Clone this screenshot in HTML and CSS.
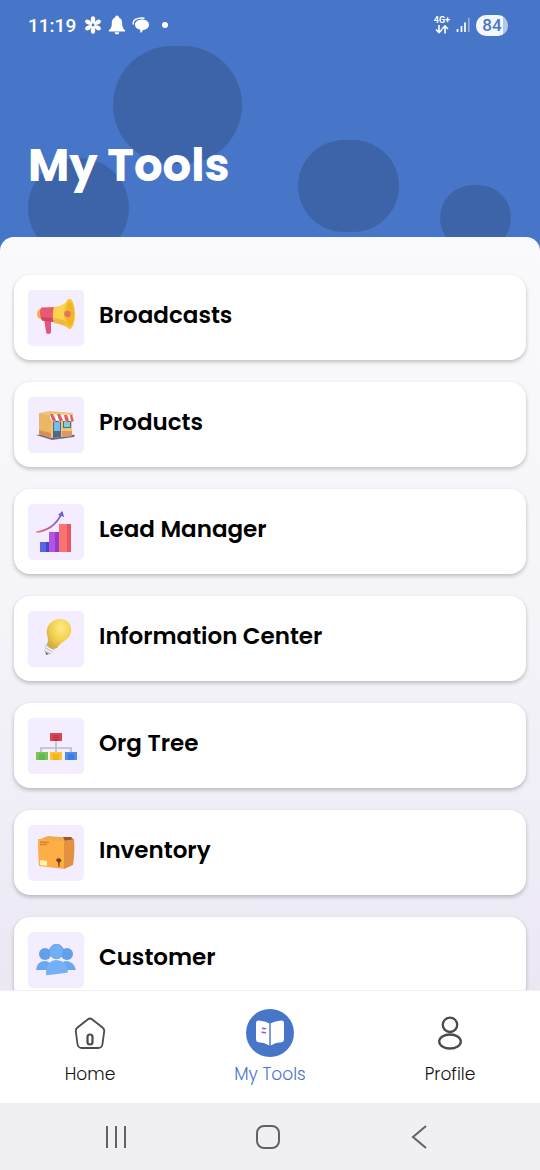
FILE: index.html
```html
<!DOCTYPE html>
<html lang="en">
<head>
  <meta charset="UTF-8">
  <meta name="viewport" content="width=device-width, initial-scale=1.0">
  <title>My Tools</title>
  <link rel="stylesheet" href="styles.css">
</head>
<body>
  <header class="header">
    <div class="bubble bubble-1"></div>
    <div class="bubble bubble-2"></div>
    <div class="bubble bubble-3"></div>
    <div class="bubble bubble-4"></div>

    <!-- Phone status bar -->
    <div class="status-bar">
      <div class="status-left">
        <span class="time">11:19</span>
        <svg width="18" height="18" viewBox="0 0 18 18" fill="#fff">
          <ellipse cx="9" cy="3.4" rx="2.2" ry="3.2"/>
          <ellipse cx="9" cy="3.4" rx="2.2" ry="3.2" transform="rotate(60 9 9)"/>
          <ellipse cx="9" cy="3.4" rx="2.2" ry="3.2" transform="rotate(120 9 9)"/>
          <ellipse cx="9" cy="3.4" rx="2.2" ry="3.2" transform="rotate(180 9 9)"/>
          <ellipse cx="9" cy="3.4" rx="2.2" ry="3.2" transform="rotate(240 9 9)"/>
          <ellipse cx="9" cy="3.4" rx="2.2" ry="3.2" transform="rotate(300 9 9)"/>
          <circle cx="9" cy="9" r="2.4" fill="none" stroke="#fff" stroke-width="2"/>
        </svg>
        <svg width="18" height="20" viewBox="0 0 18 20" fill="#fff">
          <circle cx="9" cy="2.2" r="1.8"/>
          <path d="M9 2.2C5.500 2.200 3.800 4.800 3.800 8c0 4.200-1 5.600-2.800 7.200-.5.6-.2 1.300.5 1.300h15c.7 0 1-.7.5-1.300-1.800-1.600-2.800-3-2.800-7.200 0-3.200-1.700-5.800-5.200-5.800z"/>
          <path d="M6.700 17.300h4.600c-.2 1.500-1.100 2.200-2.300 2.200s-2.100-.7-2.300-2.200z"/>
        </svg>
        <svg width="18" height="18" viewBox="0 0 18 18" fill="#fff">
          <path d="M10 3.500c4.200 0 7 2.200 7 5.200s-2.600 4.900-5.800 5.200l-2.600 3.400-.6-3.700c-2.900-.5-5-2.300-5-4.900 0-3 2.800-5.200 7-5.200z"/>
          <path d="M1.300 8C.5 4.500 4.500 1.300 12 2.200" fill="none" stroke="#fff" stroke-width="1.400" stroke-linecap="round"/>
        </svg>
        <span class="dot"></span>
      </div>
      <div class="status-right">
        <div class="network">
          <span>4G+</span>
          <svg width="14" height="9" viewBox="0 0 14 9" fill="none" stroke="#fff" stroke-width="1.6">
            <path d="M4 0v7.5M1 4.500l3 3 3-3M10 8.500V1M7 4l3-3 3 3"/>
          </svg>
        </div>
        <svg width="14" height="16" viewBox="0 0 14 16" stroke="#fff" stroke-width="1.7">
          <path d="M1.500 12v3M5.500 9v6M9 5.500V15"/>
          <path d="M12.800 1v14" opacity=".4"/>
        </svg>
        <span class="battery">84</span>
      </div>
    </div>

    <h1>My Tools</h1>
  </header>

  <main class="sheet">
    <a class="card" href="#">
      <span class="tile">
        <svg width="42" height="42" viewBox="0 0 42 42">
          <path d="M9 21h7v14q0 2-2.500 2t-2.500-2z" fill="#e0567c"/>
          <ellipse cx="5.500" cy="17" rx="3.500" ry="5" fill="#f3b24c"/>
          <path d="M6 10.500L20 10v15L7 23.500q-3.500-6.500-1-13z" fill="#e75a72"/>
          <path d="M6 20l14 1v4L7 23.500z" fill="#cf436a"/>
          <path d="M19 10Q28 9 34 3l2 29q-8-5-17-6-2.500-8 0-16z" fill="#fbd351"/>
          <path d="M19 21q9 1 17 6v5q-8-5-17-6z" fill="#f1b73d"/>
          <ellipse cx="34.500" cy="17" rx="5.500" ry="15" fill="#f7c52f"/>
          <ellipse cx="35" cy="17" rx="4" ry="12" fill="#f0b52a"/>
          <circle cx="32.500" cy="17" r="3.200" fill="#e8705e"/>
        </svg>
      </span>
      <span class="label">Broadcasts</span>
    </a>

    <a class="card" href="#">
      <span class="tile">
        <svg width="42" height="42" viewBox="0 0 42 42">
          <path d="M1 31l16-2 23 2-1 2-22 3z" fill="#716d80"/>
          <path d="M4 9l11-2 23 2v6H14z" fill="#eec477"/>
          <path d="M4 9l12 3v22L4 30z" fill="#e9b765"/>
          <path d="M16 11l21 1v20l-21 2z" fill="#f2c66f"/>
          <path d="M4 26l12 3v5L4 30z" fill="#d78f58"/>
          <path d="M18 17h8v16l-8 1z" fill="#526687"/>
          <path d="M19 18h6v9h-6z" fill="#72bdea"/>
          <path d="M28 17h8v7h-8z" fill="#3f7188"/>
          <path d="M29 18h6v5h-6z" fill="#82cadd"/>
          <path d="M27 27h10v5l-10 1z" fill="#dc9961"/>
          <path d="M15 10l22 1 2 6-3 1-2-2-3 2-3-2-3 2-3-2-3 2-3-2-1-2z" fill="#fff"/>
          <path d="M15 10h3l3 6-2 2-2-2zM22 10h3l3 6-3 2-1-2zM29 11h3l2 5-3 2-1-2zM35 11h2l2 6-3 1z" fill="#e45d60"/>
        </svg>
      </span>
      <span class="label">Products</span>
    </a>

    <a class="card" href="#">
      <span class="tile">
        <svg width="42" height="42" viewBox="0 0 42 42">
          <defs>
            <linearGradient id="curve" x1="0" y1="1" x2="1" y2="0">
              <stop offset="0" stop-color="#f0646b"/>
              <stop offset="1" stop-color="#6b5ce0"/>
            </linearGradient>
          </defs>
          <path d="M5 31h9v10H5z" fill="#5366e6"/>
          <path d="M11 31h3v10h-3z" fill="#4247bd"/>
          <path d="M14 21h10v20H14z" fill="#b554e4"/>
          <path d="M20 21h4v20h-4z" fill="#973cc7"/>
          <path d="M24 13h12v28H24z" fill="#fb7270"/>
          <path d="M32 13h4v28h-4z" fill="#e85761"/>
          <path d="M2 21Q18 19 26 4" fill="none" stroke="url(#curve)" stroke-width="1.6" stroke-linecap="round"/>
          <path d="M27.500 0L29 6l-6-2z" fill="#6960d8"/>
        </svg>
      </span>
      <span class="label">Lead Manager</span>
    </a>

    <a class="card" href="#">
      <span class="tile">
        <svg width="42" height="42" viewBox="0 0 42 42">
          <defs>
            <radialGradient id="bulb" cx=".6" cy=".3" r=".75">
              <stop offset="0" stop-color="#ffeb83"/>
              <stop offset=".55" stop-color="#f3d14f"/>
              <stop offset="1" stop-color="#d2a941"/>
            </radialGradient>
          </defs>
          <path d="M11 26l9 5-4 5q-2 1-4-.5T9 32z" fill="#c4c5cc"/>
          <path d="M10.500 28.500l8 4.500M9.500 31l7.500 4" stroke="#fff" stroke-width="1.2"/>
          <path d="M10 34l3.500 2-2 1z" fill="#575761"/>
          <path d="M12 26q2-4 0-9C10 8 17 1 25 1c8 0 12 6 11 13-1 8-10 9-14 16-4 2-9 0-10-4z" fill="url(#bulb)"/>
        </svg>
      </span>
      <span class="label">Information Center</span>
    </a>

    <a class="card" href="#">
      <span class="tile">
        <svg width="42" height="42" viewBox="0 0 42 42">
          <path d="M21 14v14M6 28v-5h30v5" fill="none" stroke="#babbc5" stroke-width="1.6"/>
          <path d="M15 8h12v8H15z" fill="#dc4250"/>
          <path d="M18 10h6v6h-6z" fill="#c5374a"/>
          <path d="M1 27h12v8H1z" fill="#75c653"/>
          <path d="M4 29h6v6H4z" fill="#67b54d"/>
          <path d="M15 27h12v8H15z" fill="#fbc629"/>
          <path d="M18 29h6v6h-6z" fill="#eeb421"/>
          <path d="M30 27h12v8H30z" fill="#4d8df0"/>
          <path d="M33 29h6v6h-6z" fill="#3f7bdb"/>
        </svg>
      </span>
      <span class="label">Org Tree</span>
    </a>

    <a class="card" href="#">
      <span class="tile">
        <svg width="42" height="42" viewBox="0 0 42 42">
          <path d="M3 8l10-4 25 2-10 4z" fill="#efab4f"/>
          <path d="M28 5h8l3 3-9 1z" fill="#9b562d"/>
          <path d="M3 7l26 2v28L4 34q-1-13-1-27z" fill="#ffae45"/>
          <path d="M29 9l10-2q1 14-1 26l-9 4z" fill="#e39140"/>
          <path d="M5 10l9 .5M5 12.500h7" stroke="#d58335" stroke-width="1.3"/>
          <path d="M5 28l7 1v5l-7-1z" fill="#fff0b5"/>
          <path d="M23 30q-2-1-1-3 3-1 4 1 0 2-2 2.500V35" fill="#70451f" stroke="#70451f"/>
        </svg>
      </span>
      <span class="label">Inventory</span>
    </a>

    <a class="card" href="#">
      <span class="tile">
        <svg width="42" height="42" viewBox="0 0 42 42">
          <circle cx="10" cy="15" r="6" fill="#659fe7"/>
          <circle cx="32" cy="15" r="6" fill="#659fe7"/>
          <path d="M1 31q1-9 9-9 6 0 8 9zM24 31q1-9 8-9 7 1 9 9z" fill="#6ca6ee"/>
          <circle cx="21.500" cy="12.500" r="7.200" fill="#70aef5" stroke="#5c96df" stroke-width=".8"/>
          <path d="M11 35q0-13 10-14 10 0 12 11 0 2-3 2l-16 2q-3 1-3-1z" fill="#73b0f7"/>
        </svg>
      </span>
      <span class="label">Customer</span>
    </a>
  </main>

  <nav class="tabs">
    <a class="tab" href="#">
      <span class="tab-icon">
        <svg width="32" height="32" viewBox="0 0 32 32" fill="none" stroke="#4a4a4a" stroke-width="1.8">
          <path d="M14 2.200q2-1.400 4 0L28.500 10.500q2 1.600 1.700 4l-1.700 12.500q-.5 4-4.500 4H8q-4 0-4.500-4L1.800 14.500q-.3-2.400 1.700-4z"/>
          <rect x="13.500" y="17.500" width="5" height="10" rx="2.500" stroke-width="2.2"/>
        </svg>
      </span>
      Home
    </a>
    <a class="tab active" href="#">
      <span class="tab-icon">
        <svg width="28" height="28" viewBox="0 0 28 28">
          <path d="M13.300 26.500Q8 23.200 2.500 23.200 0 23 0 20.500V4q0-2.800 2.800-2.600Q9 2 13.300 4.200zM14.700 26.500Q20 23.200 25.500 23.200 28 23 28 20.500V4q0-2.800-2.800-2.600Q19 2 14.700 4.200z" fill="#fff"/>
          <path d="M6 9.200l4 .6M5.500 13.200l4.500.6" stroke="#865fc4" stroke-width="1.4"/>
        </svg>
      </span>
      My Tools
    </a>
    <a class="tab" href="#">
      <span class="tab-icon">
        <svg width="26" height="34" viewBox="0 0 26 34" fill="none" stroke="#4a4a4a" stroke-width="2.3">
          <circle cx="13" cy="8.800" r="7.200"/>
          <ellipse cx="13" cy="25.500" rx="10.800" ry="7"/>
        </svg>
      </span>
      Profile
    </a>
  </nav>

  <!-- Phone navigation buttons -->
  <div class="system-bar">
    <button aria-label="Recent apps">
      <svg width="24" height="24" viewBox="0 0 24 24" stroke="#626263" stroke-width="2"><path d="M3 1v22M12 1v22M21 1v22"/></svg>
    </button>
    <button aria-label="Home screen">
      <svg width="24" height="24" viewBox="0 0 24 24" fill="none" stroke="#626263" stroke-width="2"><rect x="1" y="1" width="22" height="22" rx="7"/></svg>
    </button>
    <button aria-label="Back">
      <svg width="24" height="24" viewBox="0 0 24 24" fill="none" stroke="#626263" stroke-width="2"><path d="M19 1L6 12l13 11"/></svg>
    </button>
  </div>
</body>
</html>
```
FILE: styles.css
```css
* {
  box-sizing: border-box;
}

body {
  display: flex;
  flex-direction: column;
  height: 100vh;
  margin: 0;
  background-color: #4776c8;
  font-family: Poppins, Inter, sans-serif;
}

svg {
  display: block;
  flex-shrink: 0;
}

a {
  text-decoration: none;
}

.header {
  position: relative;
  flex-shrink: 0;
  padding-bottom: 36px;
  color: #fff;
  overflow: hidden;
}

.status-bar {
  position: relative;
  display: flex;
  justify-content: space-between;
  align-items: center;
  height: 50px;
  padding: 0 32px 0 28px;
  font-family: Roboto, sans-serif;
}

.status-left,
.status-right {
  display: flex;
  align-items: center;
  gap: 6px;
}

.time {
  margin-right: 2px;
  font-size: 19px;
  font-weight: 500;
}

.dot {
  width: 6px;
  height: 6px;
  margin-left: 6px;
  border-radius: 50%;
  background-color: #fff;
}

.network {
  display: flex;
  flex-direction: column;
  align-items: center;
  font-size: 9px;
  line-height: 9px;
  font-weight: 700;
}

.battery {
  width: 32px;
  border-radius: 10px;
  background: linear-gradient(to right, #f4f7fd 84%, #b4c7e9 84%);
  color: #4776c8;
  font-size: 17px;
  line-height: 21px;
  font-weight: 500;
  text-align: center;
}

h1 {
  position: relative;
  margin: 81px 28px 0;
  font-size: 45px;
  line-height: 70px;
  font-weight: 700;
}

.bubble {
  position: absolute;
  width: 101px;
  height: 92px;
  border-radius: 50px;
  background-color: #3d64a8;
}

.bubble-1 {
  left: 21%;
  top: 46px;
  width: 129px;
  height: 118px;
  border-radius: 60px;
}

.bubble-2 {
  left: 28px;
  top: 158px;
  height: 100px;
}

.bubble-3 {
  right: 141px;
  top: 140px;
}

.bubble-4 {
  right: 29px;
  top: 185px;
  width: 71px;
  height: 66px;
}

.sheet {
  flex: 1;
  display: flex;
  flex-direction: column;
  gap: 22px;
  min-height: 0;
  padding: 38px 14px 0;
  border-radius: 14px 14px 0 0;
  background: linear-gradient(to bottom, #fafafc, #f5f4f9 50%, #ebe8f4);
  overflow: hidden;
}

.card {
  display: flex;
  flex-shrink: 0;
  gap: 15px;
  padding: 15px 14px 14px;
  border-radius: 16px;
  background-color: #fff;
  box-shadow: 0 2px 4px rgba(0, 0, 0, 0.24);
  color: #000;
}

.tile {
  display: flex;
  justify-content: center;
  align-items: center;
  width: 56px;
  height: 56px;
  border-radius: 5px;
  background-color: #f3edff;
}

.label {
  font-size: 23px;
  line-height: 50px;
  font-weight: 600;
}

.tabs {
  display: flex;
  flex-shrink: 0;
  padding: 18px 0 17px;
  border-top: 1px solid #f0f0f2;
  background-color: #fff;
}

.tab {
  flex: 1;
  display: flex;
  flex-direction: column;
  align-items: center;
  gap: 5px;
  color: #111;
  font-size: 17px;
  line-height: 24px;
  font-weight: 300;
}

.tab-icon {
  display: flex;
  justify-content: center;
  align-items: center;
  width: 48px;
  height: 48px;
  border-radius: 50%;
}

.active {
  color: #4776c8;
}

.active .tab-icon {
  background-color: #4776c8;
}

.system-bar {
  display: flex;
  flex-shrink: 0;
  height: 67px;
  padding: 0 45px 0 40px;
  background-color: #f0f0f2;
}

.system-bar button {
  flex: 1;
  display: flex;
  justify-content: center;
  align-items: center;
  padding: 0;
  border: none;
  background: none;
  cursor: pointer;
}
```
